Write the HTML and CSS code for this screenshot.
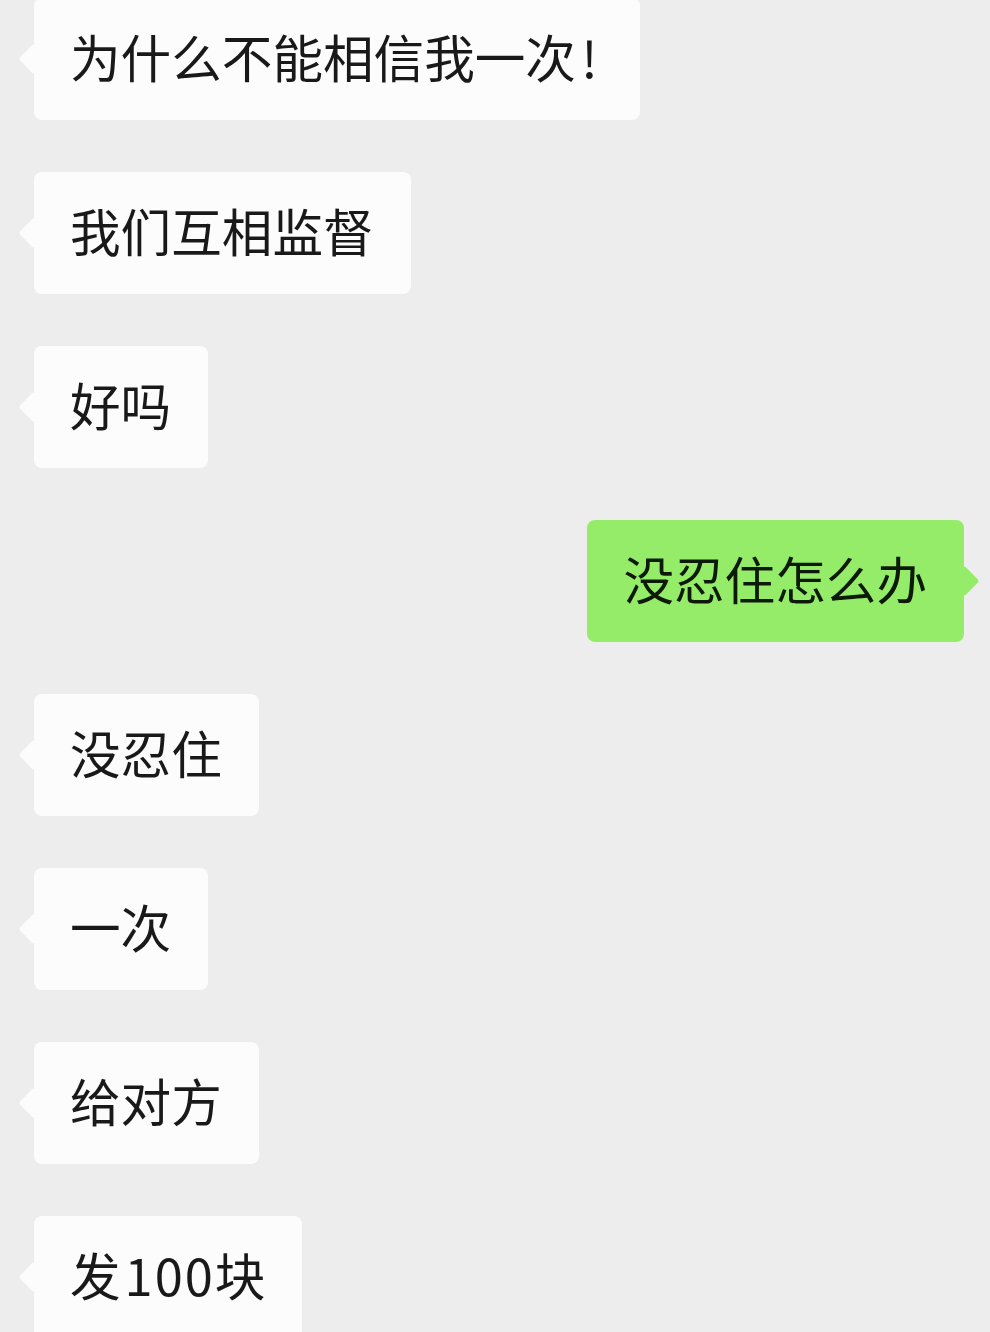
FILE: index.html
```html
<!DOCTYPE html>
<html lang="zh-CN">
  <head>
    <meta charset="UTF-8" />
    <meta name="viewport" content="width=device-width, initial-scale=1.0" />
    <title>聊天</title>
    <link rel="stylesheet" href="styles.css">
  </head>
  <body>
    <div class="chat">
      <div class="msg msg-in">为什么不能相信我一次<span class="bang">!</span></div>
      <div class="msg msg-in">我们互相监督</div>
      <div class="msg msg-in">好吗</div>
      <div class="msg msg-out">没忍住怎么办</div>
      <div class="msg msg-in">没忍住</div>
      <div class="msg msg-in">一次</div>
      <div class="msg msg-in">给对方</div>
      <div class="msg msg-in">发<span class="num">100</span>块</div>
    </div>
  </body>
</html>
```

FILE: styles.css
```css
* {
  margin: 0;
  padding: 0;
  box-sizing: border-box;
}

body {
  width: 100%;
  height: 1332px;
  overflow: hidden;
  background-color: #ededed;
  font-family: "Noto Sans CJK SC", "Noto Sans", sans-serif;
  color: #191919;
}

.chat {
  margin-top: -2px;
  display: flex;
  flex-direction: column;
  align-items: flex-start;
  gap: 52px;
}

.msg {
  position: relative;
  height: 122px;
  padding: 0 37px 6px 36px;
  font-size: 50.6px;
  line-height: 116px;
  border-radius: 8px;
  white-space: nowrap;
}

.msg::before {
  content: "";
  position: absolute;
  top: 50px;
  width: 22px;
  height: 22px;
  border-radius: 3px;
  transform: rotate(45deg);
}

.msg-in {
  margin-left: 34px;
  background-color: #fcfcfc;
}

.msg-in::before {
  left: -11px;
  background-color: #fcfcfc;
}

.msg-out {
  align-self: flex-end;
  margin-right: 26px;
  background-color: #95ec69;
  color: #0e1a08;
}

.msg-out::before {
  right: -11px;
  background-color: #95ec69;
}

.bang {
  display: inline-block;
  width: 27px;
  text-align: center;
}

.num {
  letter-spacing: 2px;
  margin-left: 4px;
}
```
